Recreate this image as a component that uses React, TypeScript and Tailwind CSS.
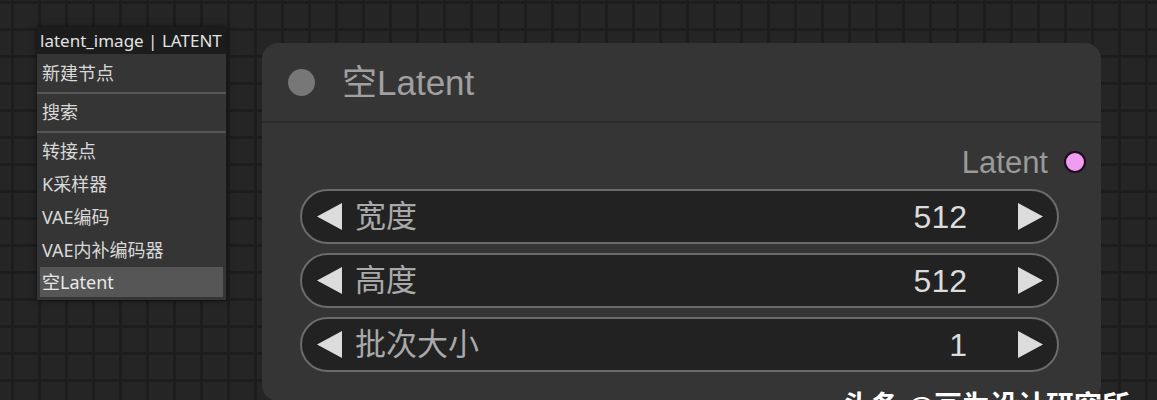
import React from "react";

const LeftArrow = () => (
  <svg width="25" height="27" viewBox="0 0 25 27" className="shrink-0">
    <polygon points="25,0 25,27 0,13.5" fill="#dcdcdc" />
  </svg>
);
const RightArrow = () => (
  <svg width="25" height="27" viewBox="0 0 25 27" className="shrink-0">
    <polygon points="0,0 0,27 25,13.5" fill="#dcdcdc" />
  </svg>
);

const Widget = ({ label, value }: { label: string; value: string }) => (
  <div className="flex h-[55px] items-center rounded-full border-2 border-[#6b6b6b] bg-[#222222] pl-[15px] pr-[14px]">
    <LeftArrow />
    <span className="ml-[13px] text-[31px] leading-none text-[#a9a9a9]">{label}</span>
    <span className="ml-auto text-[32px] leading-none text-[#dcdcdc]">{value}</span>
    <span className="ml-[51px]">
      <RightArrow />
    </span>
  </div>
);

const items = ["转接点", "K采样器", "VAE编码", "VAE内补编码器"];

export default function App() {
  return (
    <div
      className="relative h-[400px] w-[1157px] overflow-hidden bg-[#252525] bg-[image:linear-gradient(to_right,#1d1d1d_3px,transparent_3px),linear-gradient(to_bottom,#1d1d1d_3px,transparent_3px)] bg-[size:27px_27px] bg-[position:11px_1px]"
      style={{ fontFamily: '"Liberation Sans", "Noto Sans CJK SC", sans-serif' }}
    >
      {/* context menu */}
      <div
        className="absolute left-[37px] top-[27px] w-[189px] shadow-[0_0_6px_rgba(0,0,0,0.6)]"
        style={{ fontFamily: '"Noto Sans", "Noto Sans CJK SC", sans-serif' }}
      >
        <div className="flex h-[27px] items-center whitespace-nowrap bg-[#1c1c1c] pl-[3px] text-[17px] text-[#e2e2e2]">
          latent_image | LATENT
        </div>
        <div className="flex flex-col bg-[#353535] pb-[3px] text-[18px] text-[#d8d8d8]">
          <div className="flex h-[40px] items-center border-b-2 border-[#555555] pl-[5px]">新建节点</div>
          <div className="flex h-[39px] items-center border-b-2 border-[#555555] pl-[5px]">搜索</div>
          <div className="flex flex-col pt-[2px]">
            {items.map((t) => (
              <div key={t} className="flex h-[33px] items-center whitespace-nowrap pl-[5px]">
                {t}
              </div>
            ))}
            <div className="mx-[3px] flex h-[30px] items-center bg-[#565656] pl-[2px] text-[#e8e8e8]">空Latent</div>
          </div>
        </div>
      </div>

      {/* node */}
      <div className="absolute left-[262px] top-[43px] flex h-[358px] w-[839px] flex-col rounded-[16px] bg-[#353535]">
        <div className="flex h-[80px] items-center gap-[27px] border-b-2 border-[#2c2c2c] pl-[26px]">
          <div className="h-[27px] w-[27px] rounded-full bg-[#777777]" />
          <span className="text-[35px] leading-none text-[#a0a0a0]">空Latent</span>
        </div>
        <div className="mt-[19px] flex h-[40px] items-center justify-end gap-[16px] pr-[15px]">
          <span className="text-[31px] leading-none text-[#9a9a9a]">Latent</span>
          <div className="h-[22px] w-[22px] rounded-full border-2 border-[#1d0a1d] bg-[#f09cf0]" />
        </div>
        <div className="ml-[38px] mr-[42px] mt-[7px] flex flex-col gap-[9px]">
          <Widget label="宽度" value="512" />
          <Widget label="高度" value="512" />
          <Widget label="批次大小" value="1" />
        </div>
      </div>

      {/* watermark */}
      <div className="absolute left-[843px] top-[393px] whitespace-nowrap text-[28px] font-bold leading-none text-white">
        头条 @画为设计研究所
      </div>
    </div>
  );
}
